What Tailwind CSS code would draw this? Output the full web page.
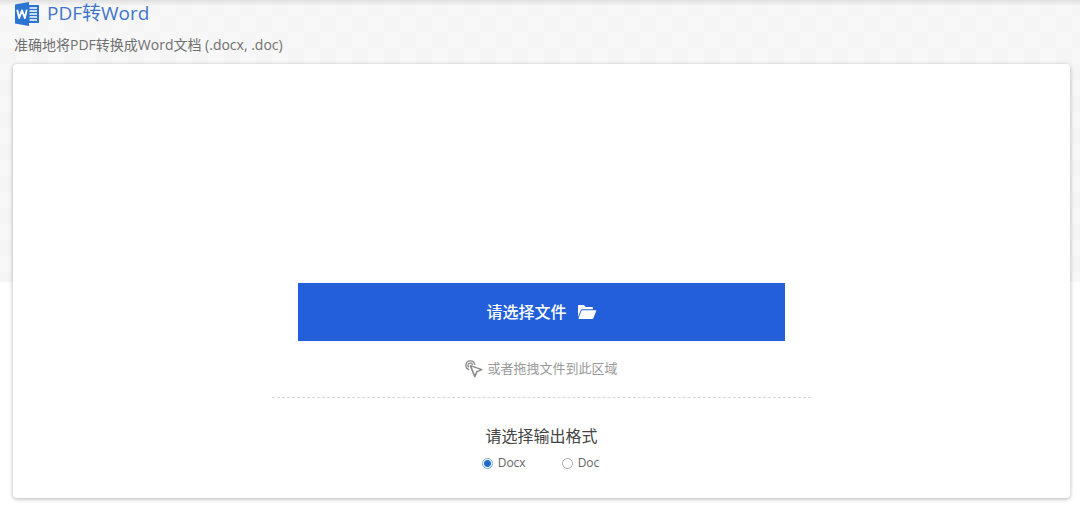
<!DOCTYPE html>
<html lang="zh-CN">
<head>
    <meta charset="UTF-8">
    <meta name="viewport" content="width=device-width, initial-scale=1.0">
    <title>PDF转Word</title>
    <script src="https://cdn.jsdelivr.net/npm/@tailwindcss/browser@4"></script>
</head>
<!-- Faint checker band behind the header, white below it -->
<body class="min-h-screen bg-white bg-[linear-gradient(#00000018,#00000000_6px,#00000000_282px,#fff_282px),repeating-conic-gradient(#f5f5f5_0_25%,#f8f8f8_0_50%)] bg-[length:100%_100%,32px_32px] text-[#444] font-['Open_Sans','Noto_Sans_CJK_SC',sans-serif]">
    <main class="pl-[13px] pr-[10px] pb-3">
        <header>
            <h1 class="flex items-center gap-2 h-[26px] pl-[2px] text-[19px] leading-[26px] font-normal text-[#3f76cc]">
                <svg class="w-6 h-6 mt-[2px]" viewBox="0 0 24 24" aria-hidden="true">
                    <path fill="#2b74d2" d="M0 2.5 14 0v24L0 21.5z"/>
                    <path fill="#2b74d2" d="M14 3h9.2q.8 0 .8.8v16.4q0 .8-.8.8H14z"/>
                    <path stroke="#fff" stroke-width="1.3" d="M14.5 6H22M14.5 9H22M14.5 12H22M14.5 15H22M14.5 18H22"/>
                    <path fill="none" stroke="#fff" stroke-width="1.9" stroke-linejoin="round" d="m2.2 7.8 2 8.2L7 8.4l2.8 7.6 2-8.4"/>
                </svg>
                PDF转Word
            </h1>
            <p class="mt-[9px] pl-px text-sm leading-5 text-[#707070]">准确地将PDF转换成Word文档 (.docx, .doc)</p>
        </header>

        <section class="mt-[9px] flex flex-col items-center bg-white rounded-sm shadow-[0_1px_4px_rgba(0,0,0,0.3)] pt-[219px] pb-[25px]">
            <button type="button" class="flex items-center justify-center gap-[10px] w-[46%] h-[58px] bg-[#235fdb] text-white text-base font-medium">
                请选择文件
                <svg class="w-5 h-4" viewBox="0 0 20 16" fill="#fff" aria-hidden="true">
                    <path d="M1 13V2q0-1 1-1h4.5q.6 0 1 .5L8.7 3H15q1 0 1 1v1.2H5.2q-1 0-1.4.9z"/>
                    <path d="M5.6 6.2h13q1 0 .6.9l-2.7 7q-.4.9-1.3.9H2.3q-1 0-.6-1l2.6-6.9q.4-.9 1.3-.9z"/>
                </svg>
            </button>

            <!-- Drag and drop hint -->
            <div class="flex items-center justify-center gap-1 w-[51%] h-[57px] border-b border-dashed border-[#d8d8d8] text-[#999] text-[13px]">
                <svg class="w-[18px] h-[18px]" viewBox="0 0 18 18" fill="none" stroke="#888" stroke-linejoin="round" aria-hidden="true">
                    <path stroke-width="1.3" d="M4.2 9.6A4.4 4.4 0 1 1 9.7 5"/>
                    <path stroke-width="1.3" d="M4 7.3A2.3 2.3 0 1 1 7.5 4.8"/>
                    <path stroke-width="1.5" d="m5.4 5.6 11.4 4-4.8 2-2.2 5z"/>
                </svg>
                或者拖拽文件到此区域
            </div>

            <fieldset class="mt-[26px]">
                <legend class="mx-auto text-base leading-6">请选择输出格式</legend>
                <div class="mt-[5px] flex justify-center gap-9 pr-[2px] text-xs leading-5 text-[#666]">
                    <label class="flex items-center gap-[5px]">
                        <input type="radio" name="format" value="docx" checked class="appearance-none w-[11px] h-[11px] rounded-full border border-[#aaa] bg-white checked:border-[#7ba7e0] checked:bg-[radial-gradient(circle,#2169c9_3px,#fff_4px)]">
                        Docx
                    </label>
                    <label class="flex items-center gap-[5px]">
                        <input type="radio" name="format" value="doc" class="appearance-none w-[11px] h-[11px] rounded-full border border-[#aaa] bg-white checked:border-[#7ba7e0] checked:bg-[radial-gradient(circle,#2169c9_3px,#fff_4px)]">
                        Doc
                    </label>
                </div>
            </fieldset>
        </section>
    </main>
</body>
</html>
